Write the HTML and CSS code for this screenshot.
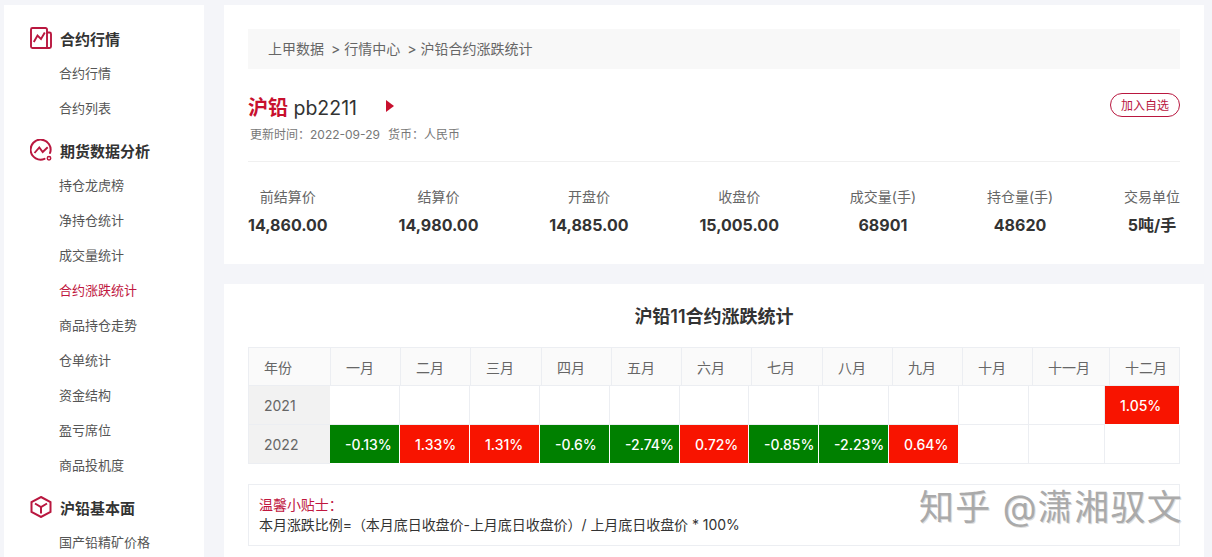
FILE: index.html
```html
<!DOCTYPE html>
<html lang="zh">
<head>
<meta charset="utf-8">
<title>沪铅合约涨跌统计</title>
<link rel="stylesheet" href="styles.css">
</head>
<body>
<div class="page">
  <aside class="sidebar">
    <section class="group">
      <h3 class="group-title">
        <svg class="icon" viewBox="0 0 22 22" fill="none"><path d="M17 5.500V2.500A1.500 1.500 0 0 0 15.500 1H2.500A1.500 1.500 0 0 0 1 2.500V19.500A1.500 1.500 0 0 0 2.500 21H19.500A1.500 1.500 0 0 0 21 19.500V7A1.500 1.500 0 0 0 19.500 5.500H17V21" stroke="#b9173f" stroke-width="1.900"/><path d="M3.800 15L7.500 8.500L11 12L14.800 5.500" stroke="#b9173f" stroke-width="1.900"/></svg>
        合约行情
      </h3>
      <a class="item">合约行情</a>
      <a class="item">合约列表</a>
    </section>
    <section class="group">
      <h3 class="group-title">
        <svg class="icon" viewBox="0 0 22 22" fill="none"><path d="M14.500 19.800A10 10 0 1 1 20 14" stroke="#b9173f" stroke-width="2" stroke-linecap="round"/><circle cx="19" cy="19.200" r="1.700" stroke="#b9173f" stroke-width="1.500"/><path d="M4.500 14L9.300 8.500L12.700 13L17.700 8.300" stroke="#b9173f" stroke-width="1.900"/></svg>
        期货数据分析
      </h3>
      <a class="item">持仓龙虎榜</a>
      <a class="item">净持仓统计</a>
      <a class="item">成交量统计</a>
      <a class="item active">合约涨跌统计</a>
      <a class="item">商品持仓走势</a>
      <a class="item">仓单统计</a>
      <a class="item">资金结构</a>
      <a class="item">盈亏席位</a>
      <a class="item">商品投机度</a>
    </section>
    <section class="group">
      <h3 class="group-title">
        <svg class="icon" viewBox="0 0 22 22" fill="none"><path d="M11 1L20.500 6V16L11 21L1.500 16V6Z" stroke="#b9173f" stroke-width="2"/><path d="M5 7.500L11 11L17 7.500M11 11V17.500" stroke="#b9173f" stroke-width="2"/></svg>
        沪铅基本面
      </h3>
      <a class="item">国产铅精矿价格</a>
    </section>
  </aside>

  <main class="main">
    <section class="card summary">
      <nav class="crumbs"><span>上甲数据</span><span>&gt; 行情中心</span><span>&gt; 沪铅合约涨跌统计</span></nav>
      <header class="head">
        <div>
          <div class="title-row">
            <h1 class="title"><b>沪铅</b> pb2211</h1>
            <span class="arrow"></span>
          </div>
          <p class="meta"><span>更新时间：2022-09-29</span><span>货币：人民币</span></p>
        </div>
        <button class="add">加入自选</button>
      </header>
      <div class="stats">
        <div class="stat"><span>前结算价</span><strong>14,860.00</strong></div>
        <div class="stat"><span>结算价</span><strong>14,980.00</strong></div>
        <div class="stat"><span>开盘价</span><strong>14,885.00</strong></div>
        <div class="stat"><span>收盘价</span><strong>15,005.00</strong></div>
        <div class="stat"><span>成交量(手)</span><strong>68901</strong></div>
        <div class="stat"><span>持仓量(手)</span><strong>48620</strong></div>
        <div class="stat"><span>交易单位</span><strong>5吨/手</strong></div>
      </div>
    </section>

    <section class="card stats-card">
      <h2 class="table-title">沪铅11合约涨跌统计</h2>
      <div class="table">
        <div class="row head-row">
          <div>年份</div><div>一月</div><div>二月</div><div>三月</div><div>四月</div><div>五月</div><div>六月</div><div>七月</div><div>八月</div><div>九月</div><div>十月</div><div>十一月</div><div>十二月</div>
        </div>
        <div class="row body-row">
          <div class="year">2021</div><div></div><div></div><div></div><div></div><div></div><div></div><div></div><div></div><div></div><div></div><div></div><div class="up">1.05%</div>
        </div>
        <div class="row body-row">
          <div class="year">2022</div><div class="down">-0.13%</div><div class="up">1.33%</div><div class="up">1.31%</div><div class="down">-0.6%</div><div class="down">-2.74%</div><div class="up">0.72%</div><div class="down">-0.85%</div><div class="down">-2.23%</div><div class="up">0.64%</div><div></div><div></div><div></div>
        </div>
      </div>
      <div class="tips">
        <p class="tips-title">温馨小贴士：</p>
        <p>本月涨跌比例=（本月底日收盘价-上月底日收盘价）/ 上月底日收盘价 * 100%</p>
      </div>
    </section>
  </main>
</div>
<div class="watermark">知乎 @潇湘驭文</div>
</body>
</html>
```
FILE: styles.css
```css
* { box-sizing: border-box; }
html, body { height: 100%; }
body {
  margin: 0;
  overflow: hidden;
  background: #f4f5f9;
  color: #333;
  font-family: Inter, "Noto Sans CJK SC", sans-serif;
}
h1, h2, h3, p { margin: 0; font-weight: normal; }
.page {
  display: flex;
  gap: 20px;
  padding: 5px 8px 0 4px;
  height: 557px;
}
.sidebar {
  flex: 0 0 200px;
  background: #fff;
  padding: 18px 0 0 26px;
  overflow: hidden;
}
.group { display: flex; flex-direction: column; margin-bottom: 9px; flex: none; }
.group-title {
  display: flex;
  align-items: center;
  gap: 8px;
  height: 30px;
  margin-bottom: 3px;
  font-size: 15px;
  font-weight: 600;
  color: #333;
}
.icon { width: 22px; height: 22px; flex: none; }
.item {
  height: 35px;
  line-height: 35px;
  padding-left: 29px;
  font-size: 13px;
  color: #555;
}
.item.active { color: #c0173f; }
.main {
  flex: 1;
  display: flex;
  flex-direction: column;
  gap: 20px;
  min-width: 0;
}
.card { background: #fff; padding: 24px; }
.summary { height: 259px; flex: none; }
.crumbs {
  display: flex;
  gap: 7px;
  align-items: center;
  height: 40px;
  padding: 0 0 3px 20px;
  background: #f8f8f8;
  font-size: 14px;
  color: #666;
}
.head {
  display: flex;
  justify-content: space-between;
  height: 93px;
  padding-top: 24px;
  border-bottom: 1px solid #f0f0f0;
}
.title-row { display: flex; align-items: center; gap: 29px; height: 26px; }
.title { font-size: 19.500px; color: #333; white-space: nowrap; }
.title b { color: #c8102e; font-size: 20px; font-weight: 600; }
.arrow {
  width: 0;
  height: 0;
  border-left: 8px solid #c8102e;
  border-top: 6px solid transparent;
  border-bottom: 6px solid transparent;
}
.meta { display: flex; gap: 8px; margin: 6px 0 0 2px; font-size: 12px; color: #777; }
.add {
  width: 70px;
  height: 24px;
  padding: 0 0 2px;
  border: 1px solid #b9173f;
  border-radius: 12px;
  background: #fff;
  color: #b9173f;
  font: 12px Inter, "Noto Sans CJK SC", sans-serif;
}
.stats { display: flex; justify-content: space-between; padding-top: 24px; }
.stat { display: flex; flex-direction: column; align-items: center; gap: 5px; }
.stat span { font-size: 14px; line-height: 22px; color: #666; }
.stat strong { font-size: 16px; line-height: 24px; font-weight: 700; color: #333; }
.stats-card { flex: 1; padding-top: 20px; }
.table-title {
  text-align: center;
  font-size: 18px;
  font-weight: 600;
  line-height: 26px;
  color: #333;
  margin-bottom: 17px;
}
.table { border-top: 1px solid #eceef2; border-left: 1px solid #eceef2; }
.row { display: grid; font-size: 14px; }
.row > div {
  display: flex;
  align-items: center;
  padding-left: 15px;
  border-right: 1px solid #eceef2;
  border-bottom: 1px solid #eceef2;
}
.head-row {
  grid-template-columns: 82px 70px 70px 71px 70px 70px 70px 71px 70px 70px 70px 77px 70px;
  height: 38px;
  background: #fafafa;
  color: #666;
}
.body-row {
  grid-template-columns: 81px 70px 70px 70px 70px 70px 69px 70px 70px 70px 70px 76px 75px;
  height: 39px;
  color: #fff;
}
.body-row > div.year {
  background: #f2f2f2;
  color: #666;
  border-right: 0;
}
.up, .down { font-size: 14px; font-weight: 500; border-color: #fff !important; }
.up { background: #f81400; }
.down { background: #008000; }
.tips {
  margin-top: 20px;
  height: 62px;
  padding: 10px 10px;
  border: 1px solid #eceef2;
  font-size: 14px;
  line-height: 20px;
  letter-spacing: -0.05px;
  color: #333;
}
.tips-title { color: #c0173f; }
.watermark {
  position: absolute;
  left: 919px;
  top: 484px;
  font-size: 35px;
  line-height: 46px;
  letter-spacing: 1.300px;
  color: #aaa;
  text-shadow: 1px 1px 0 #ddd;
  white-space: nowrap;
}
```
